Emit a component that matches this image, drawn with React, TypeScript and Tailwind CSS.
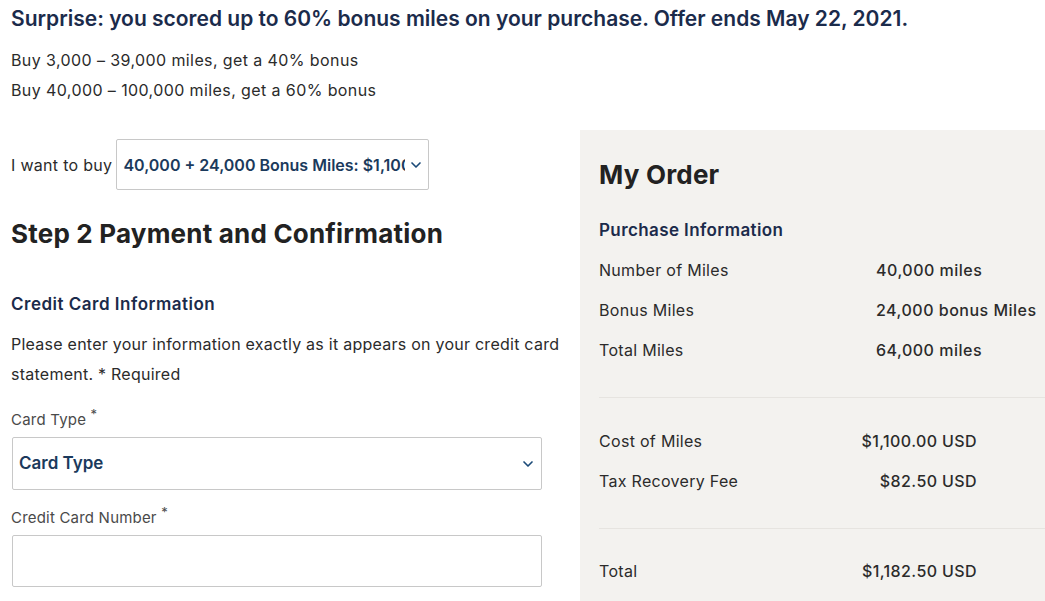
import { ChevronDown } from "lucide-react";

const font = { fontFamily: "Inter, 'Liberation Sans', sans-serif" };

function Row({ label, value, right }: { label: string; value: string; right?: boolean }) {
  if (right) {
    return (
      <div className="flex items-center justify-between h-10 pr-[68px] text-[16px] tracking-[0.3px] text-[#2b2b2b]">
        <span>{label}</span>
        <span className="font-medium whitespace-nowrap tracking-[0.4px]">{value}</span>
      </div>
    );
  }
  return (
    <div className="flex items-center h-10 text-[16px] tracking-[0.3px] text-[#2b2b2b]">
      <span className="w-[277px]">{label}</span>
      <span className="font-medium whitespace-nowrap tracking-[0.5px]">{value}</span>
    </div>
  );
}

export default function App() {
  return (
    <div className="w-[1045px] h-[601px] overflow-hidden bg-white" style={font}>
      <div className="pl-[11px] pt-[4px]">
        <h1 className="text-[21px] leading-[30px] font-semibold text-[#1b2b4b]">
          Surprise: you scored up to 60% bonus miles on your purchase. Offer ends May 22, 2021.
        </h1>
        <div className="mt-[11px] text-[16px] leading-[30px] tracking-[0.4px] text-[#2b2b2b]">
          <p>Buy 3,000 – 39,000 miles, get a 40% bonus</p>
          <p>Buy 40,000 – 100,000 miles, get a 60% bonus</p>
        </div>
      </div>

      <div className="flex mt-[25px]">
        {/* left column */}
        <div className="w-[580px] pl-[11px] pt-[9px]">
          <div className="flex items-center gap-[4px]">
            <span className="text-[16px] tracking-[0.3px] text-[#2b2b2b]">I want to buy</span>
            <div className="w-[313px] h-[51px] border border-[#c8c8c8] rounded-[2px] flex items-center pl-[6px] pr-[4px]">
              <span className="flex-1 overflow-hidden whitespace-nowrap text-[16px] font-semibold text-[#1b3a5c]">
                40,000 + 24,000 Bonus Miles: $1,100.00
              </span>
              <ChevronDown className="w-4 h-4 text-[#1b4a78] ml-[3px]" strokeWidth={2.5} />
            </div>
          </div>

          <h2 className="mt-[24px] text-[26px] leading-[40px] font-bold tracking-[0.2px] text-[#222]">
            Step 2 Payment and Confirmation
          </h2>

          <h3 className="mt-[40px] text-[17px] leading-[20px] font-semibold tracking-[0.5px] text-[#1b2b4b]">
            Credit Card Information
          </h3>
          <p className="mt-[15px] w-[560px] text-[16px] leading-[30px] tracking-[0.25px] text-[#2b2b2b]">
            Please enter your information exactly as it appears on your credit card statement. * Required
          </p>

          <div className="mt-[21px] text-[15px] leading-[20px] tracking-[0.2px] text-[#4a4a4a]">
            Card Type <sup className="text-[13px]">*</sup>
          </div>
          <div className="mt-[7px] ml-px w-[530px] h-[53px] border border-[#c8c8c8] rounded-[2px] flex items-center pl-[6px] pr-[5px]">
            <span className="flex-1 text-[17px] font-semibold text-[#1b3a5c]">Card Type</span>
            <ChevronDown className="w-4 h-4 text-[#1b4a78]" strokeWidth={2.5} />
          </div>

          <div className="mt-[18px] text-[15px] leading-[20px] tracking-[0.2px] text-[#4a4a4a]">
            Credit Card Number <sup className="text-[13px]">*</sup>
          </div>
          <div className="mt-[7px] ml-px w-[530px] h-[52px] border border-[#c8c8c8] rounded-[2px]" />
        </div>

        {/* right panel */}
        <div className="flex-1 bg-[#f3f2ef] pl-[19px] pt-[25px] h-[480px]">
          <h2 className="text-[26px] leading-[40px] font-bold tracking-[0.2px] text-[#222]">My Order</h2>
          <h3 className="mt-[25px] text-[17px] leading-[20px] font-semibold tracking-[0.4px] text-[#1b2b4b]">
            Purchase Information
          </h3>
          <div className="mt-[10px]">
            <Row label="Number of Miles" value="40,000 miles" />
            <Row label="Bonus Miles" value="24,000 bonus Miles" />
            <Row label="Total Miles" value="64,000 miles" />
          </div>
          <div className="mt-[27px] border-t border-[#e6e4e0]" />
          <div className="mt-[23px]">
            <Row label="Cost of Miles" value="$1,100.00 USD" right />
            <Row label="Tax Recovery Fee" value="$82.50 USD" right />
          </div>
          <div className="mt-[27px] border-t border-[#e6e4e0]" />
          <div className="mt-[22px]">
            <Row label="Total" value="$1,182.50 USD" right />
          </div>
        </div>
      </div>
    </div>
  );
}
